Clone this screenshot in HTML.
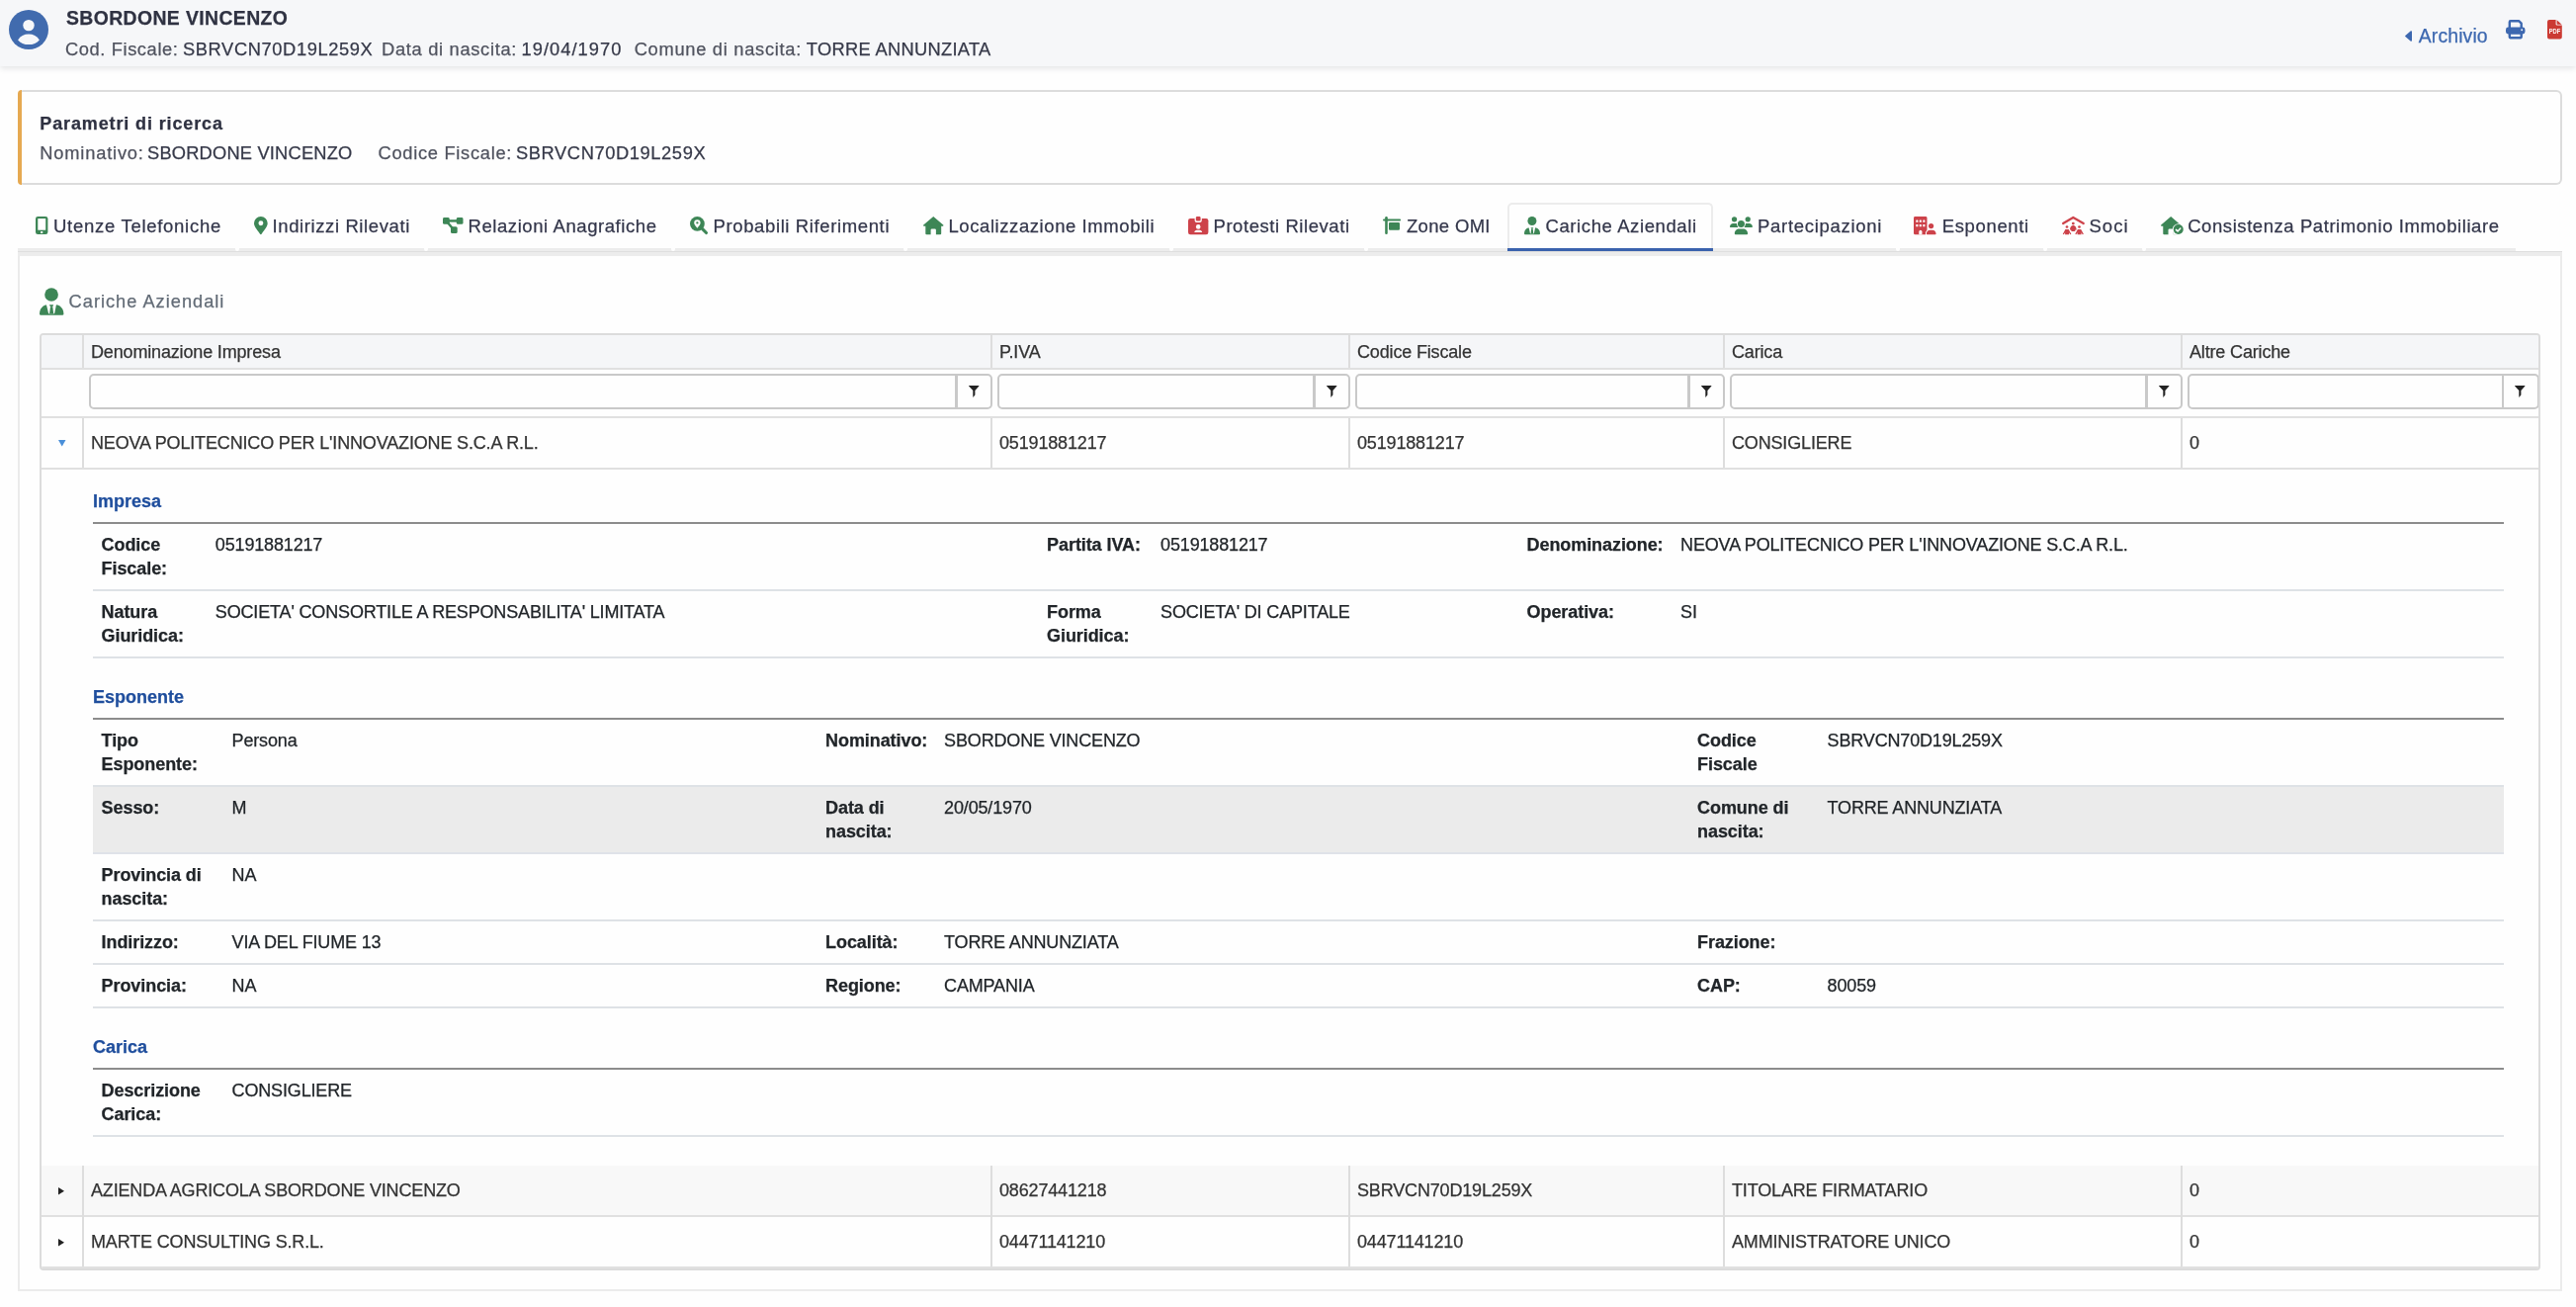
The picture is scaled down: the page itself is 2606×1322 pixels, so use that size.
<!DOCTYPE html>
<html lang="it"><head><meta charset="utf-8"><title>Cariche Aziendali</title>
<style>
*{box-sizing:border-box;margin:0;padding:0}
html,body{width:2606px;height:1322px;overflow:hidden;background:#fefefe}
body{position:relative;font-family:"Liberation Sans",Arial,Helvetica,sans-serif;-webkit-font-smoothing:antialiased;-webkit-text-stroke:0.25px}
.t{position:absolute;white-space:nowrap}
.abs{position:absolute}
svg{position:absolute;overflow:visible}
#wrap{position:absolute;left:0;top:0;width:2606px;height:1322px;will-change:transform}
#hdr{position:absolute;left:0;top:0;width:2606px;height:67px;background:#f6f7f9;box-shadow:0 2px 6px rgba(40,44,60,.13)}
#params{position:absolute;left:18px;top:91px;width:2574px;height:96px;background:#fefefe;border:2px solid #dcdcdc;border-left:0;border-radius:6px}
#params:before{content:"";position:absolute;left:0;top:-2px;bottom:-2px;width:4px;background:#e6a951;border-radius:4px 0 0 4px}
#content{position:absolute;left:18px;top:259px;width:2574px;height:1047px;background:#fefefe;border:2px solid #ebebeb;border-top:0}
#tabline{position:absolute;left:18px;top:251px;width:2527px;height:8px;background:#ececec}
#tabline2{position:absolute;left:18px;top:254px;width:2574px;height:1px;background:#dedede}
#tabfill{position:absolute;left:2545px;top:255px;width:47px;height:4px;background:#ececec}
.notch{position:absolute;top:250px;width:4px;height:4px;background:#fefefe;border-radius:0 0 2px 2px}
#tabact{position:absolute;left:1525px;top:205px;width:208px;height:49px;border:2px solid #ececec;border-bottom:0;border-radius:5px 5px 0 0;background:#fefefe}
#tabact:after{content:"";position:absolute;left:-2px;right:-2px;bottom:0;height:3px;background:#3a62ad}
#grid{position:absolute;left:40px;top:337px;width:2530px;height:948px;border:2px solid #dcdcdc;border-radius:4px;background:#fefefe;overflow:hidden;font-size:18px;color:#333;letter-spacing:-0.16px}
.vl{position:absolute;width:2px;background:#dddddd}
.hl{position:absolute;height:2px;background:#e0e0e0;left:0;width:2526px}
.fi{position:absolute;top:39px;height:36px;border:2px solid #c9c9c9;border-radius:5px;background:#fefefe}
.fi i{position:absolute;right:33.5px;top:0;bottom:0;width:2.5px;background:#c9c9c9}
.g{position:absolute;white-space:nowrap;font-size:18px;line-height:24px;color:#333}
.sec{letter-spacing:0;position:absolute;left:52px;font-size:18px;line-height:24px;font-weight:700;color:#1f4e9d;white-space:nowrap}
table.d{position:absolute;left:52px;width:2439px;border-collapse:collapse;border-top:2px solid #8c8c8c;font-size:18px;line-height:24px;color:#212529;table-layout:fixed}
table.d td{padding:9px 9.6px 9px 9.6px;vertical-align:top;border-bottom:2px solid #dee2e6;white-space:normal}
table.d th{letter-spacing:-0.08px;padding:9px 0 9px 9.6px;vertical-align:top;border-bottom:2px solid #dee2e6;text-align:left;font-weight:700}
table.d th:first-child{padding-left:8.6px}
table.d tr.alt td,table.d tr.alt th{background:#ebebeb;border-bottom-color:#dfe2e8}
</style></head><body><div id="wrap">

<div id="hdr"></div>
<svg style="left:9px;top:10px" width="40" height="40" viewBox="0 0 40 40">
<circle cx="20" cy="20" r="20" fill="#416bae"/><circle cx="20" cy="15.600" r="5.700" fill="#f6f7f9"/>
<path d="M9.100 30.400C11.500 26.600 15.500 24.600 20 24.600S28.500 26.600 30.900 30.400C28.500 33.400 24.500 35.100 20 35.100S11.500 33.400 9.100 30.400z" fill="#f6f7f9"/></svg>
<span class="t " style="left:67.00px;top:9.18px;font-size:19.4px;line-height:19.4px;color:#2f3242;font-weight:700;letter-spacing:0.392px;">SBORDONE VINCENZO</span>
<span class="t " style="left:66.00px;top:41.01px;font-size:18.3px;line-height:18.3px;color:#50535f;letter-spacing:0.601px;">Cod. Fiscale:</span>
<span class="t " style="left:185.00px;top:41.01px;font-size:18.3px;line-height:18.3px;color:#363949;letter-spacing:0.614px;">SBRVCN70D19L259X</span>
<span class="t " style="left:386.00px;top:41.01px;font-size:18.3px;line-height:18.3px;color:#50535f;letter-spacing:0.691px;">Data di nascita:</span>
<span class="t " style="left:527.50px;top:41.01px;font-size:18.3px;line-height:18.3px;color:#363949;letter-spacing:1.045px;">19/04/1970</span>
<span class="t " style="left:641.70px;top:41.01px;font-size:18.3px;line-height:18.3px;color:#50535f;letter-spacing:0.715px;">Comune di nascita:</span>
<span class="t " style="left:815.80px;top:41.01px;font-size:18.3px;line-height:18.3px;color:#363949;letter-spacing:0.313px;">TORRE ANNUNZIATA</span>
<svg style="left:2433px;top:30.8px" width="7" height="11" viewBox="0 0 7 11"><path d="M6.300 .9V10.100L.8 5.500z" fill="#3d68b0" stroke="#3d68b0" stroke-width="1.400" stroke-linejoin="round"/></svg>
<span class="t " style="left:2446.80px;top:27.28px;font-size:19.4px;line-height:19.4px;color:#3d68b0;letter-spacing:0.128px;">Archivio</span>
<svg style="left:2535.4px;top:20.1px" width="19.5" height="19.4" viewBox="0 0 19.5 19.4" fill="none">
<path d="M3.800 8V2.200a1 1 0 0 1 1-1h8.300l2.600 2.500V8" stroke="#3d68b0" stroke-width="2.400" stroke-linejoin="round"/>
<rect x="0" y="7.600" width="19.500" height="6.900" rx="2.400" fill="#3d68b0"/>
<rect x="3.800" y="13.500" width="11.900" height="4.700" rx=".6" fill="#f6f7f9" stroke="#3d68b0" stroke-width="2.400"/>
<circle cx="16.200" cy="10.300" r=".95" fill="#f6f7f9"/></svg>
<svg style="left:2577.4px;top:20px" width="14.8" height="19.6" viewBox="0 0 14.8 19.6">
<path d="M2 0H8.600V4.500a1.100 1.100 0 0 0 1.100 1.100H14.800V17.600a2 2 0 0 1-2 2H2a2 2 0 0 1-2-2V2a2 2 0 0 1 2-2z" fill="#cb3a33"/>
<path d="M9.600 .2L14.600 4.700H10.300a.7.700 0 0 1-.7-.7z" fill="#cb3a33"/>
<text x="1.700" y="14.200" font-family="Liberation Sans,Arial,sans-serif" font-size="7.600" font-weight="700" fill="#fff" textLength="11.600" lengthAdjust="spacingAndGlyphs">PDF</text></svg>
<div id="params"></div>
<span class="t " style="left:40.30px;top:115.56px;font-size:18px;line-height:18px;color:#2f3242;font-weight:700;letter-spacing:0.874px;">Parametri di ricerca</span>
<span class="t " style="left:40.30px;top:146.01px;font-size:18.3px;line-height:18.3px;color:#50535f;letter-spacing:0.808px;">Nominativo:</span>
<span class="t " style="left:149.00px;top:146.01px;font-size:18.3px;line-height:18.3px;color:#363949;letter-spacing:0.195px;">SBORDONE VINCENZO</span>
<span class="t " style="left:382.50px;top:146.01px;font-size:18.3px;line-height:18.3px;color:#50535f;letter-spacing:0.707px;">Codice Fiscale:</span>
<span class="t " style="left:522.00px;top:146.01px;font-size:18.3px;line-height:18.3px;color:#363949;letter-spacing:0.601px;">SBRVCN70D19L259X</span>
<div id="tabline"></div><div id="tabfill"></div><div id="tabline2"></div>
<div class="notch" style="left:237.7px"></div>
<div class="notch" style="left:429.0px"></div>
<div class="notch" style="left:678.6px"></div>
<div class="notch" style="left:914.4px"></div>
<div class="notch" style="left:1182.7px"></div>
<div class="notch" style="left:1380.0px"></div>
<div class="notch" style="left:1917.5px"></div>
<div class="notch" style="left:2067.4px"></div>
<div class="notch" style="left:2167.0px"></div>
<div id="tabact"></div>
<span class="t " style="left:54.00px;top:219.94px;font-size:18.5px;line-height:18.5px;color:#33364a;letter-spacing:0.717px;">Utenze Telefoniche</span>
<span class="t " style="left:275.50px;top:219.94px;font-size:18.5px;line-height:18.5px;color:#33364a;letter-spacing:0.605px;">Indirizzi Rilevati</span>
<span class="t " style="left:473.50px;top:219.94px;font-size:18.5px;line-height:18.5px;color:#33364a;letter-spacing:0.577px;">Relazioni Anagrafiche</span>
<span class="t " style="left:721.50px;top:219.94px;font-size:18.5px;line-height:18.5px;color:#33364a;letter-spacing:0.623px;">Probabili Riferimenti</span>
<span class="t " style="left:959.50px;top:219.94px;font-size:18.5px;line-height:18.5px;color:#33364a;letter-spacing:0.574px;">Localizzazione Immobili</span>
<span class="t " style="left:1227.50px;top:219.94px;font-size:18.5px;line-height:18.5px;color:#33364a;letter-spacing:0.561px;">Protesti Rilevati</span>
<span class="t " style="left:1423.00px;top:219.94px;font-size:18.5px;line-height:18.5px;color:#33364a;letter-spacing:0.322px;">Zone OMI</span>
<span class="t " style="left:1563.50px;top:219.94px;font-size:18.5px;line-height:18.5px;color:#33364a;letter-spacing:0.597px;">Cariche Aziendali</span>
<span class="t " style="left:1778.00px;top:219.94px;font-size:18.5px;line-height:18.5px;color:#33364a;letter-spacing:0.707px;">Partecipazioni</span>
<span class="t " style="left:1964.70px;top:219.94px;font-size:18.5px;line-height:18.5px;color:#33364a;letter-spacing:0.652px;">Esponenti</span>
<span class="t " style="left:2113.50px;top:219.94px;font-size:18.5px;line-height:18.5px;color:#33364a;letter-spacing:1.003px;">Soci</span>
<span class="t " style="left:2213.20px;top:219.94px;font-size:18.5px;line-height:18.5px;color:#33364a;letter-spacing:0.566px;">Consistenza Patrimonio Immobiliare</span>
<svg style="left:35.6px;top:219.0px" width="12.4" height="18.1" viewBox="0 0 12.4 18.1"><rect x="0" y="0" width="12.4" height="18.1" rx="2.3" fill="#3d8656"/><rect x="2.3" y="2.1" width="7.9" height="11.6" fill="#fff"/><rect x="5.1" y="14.9" width="2.2" height="2.1" rx=".4" fill="#fff"/></svg>
<svg style="left:256.5px;top:219.0px" width="13.7" height="18.1" viewBox="0 0 13.7 18.1"><path d="M6.85 0A6.85 6.85 0 0 0 0 6.85C0 9.9 2.4 12.6 6.1 17.7a.95.95 0 0 0 1.500 0C11.300 12.600 13.700 9.900 13.700 6.850A6.850 6.850 0 0 0 6.850 0z" fill="#3d8656"/><circle cx="6.900" cy="6.800" r="2.450" fill="#fff"/></svg>
<svg style="left:448.1px;top:220.1px" width="20.5" height="15.9" viewBox="0 0 20.5 15.9"><rect x="0" y="0" width="6.700" height="6.700" rx="1.500" fill="#3d8656"/><rect x="13.800" y="0" width="6.700" height="6.700" rx="1.500" fill="#3d8656"/><rect x="8" y="9.200" width="6.700" height="6.700" rx="1.500" fill="#3d8656"/><rect x="5" y="2.200" width="10" height="2.450" fill="#3d8656"/><path d="M5.200 5.400L9.600 10.800" stroke="#3d8656" stroke-width="2.400"/></svg>
<svg style="left:698.0px;top:219.0px" width="18.2" height="18.2" viewBox="0 0 18.2 18.2"><path d="M12.400 12.400L16.500 16.500" stroke="#3d8656" stroke-width="3.100" stroke-linecap="round"/><circle cx="7.400" cy="7.400" r="7.400" fill="#3d8656"/><path d="M7.400 3.300a3.200 3.200 0 0 0-3.200 3.200c0 1.700 1.600 3.200 3.200 5.300 1.600-2.100 3.200-3.600 3.200-5.300a3.200 3.200 0 0 0-3.200-3.200z" fill="#fff"/><circle cx="7.400" cy="6.400" r="1.150" fill="#3d8656"/></svg>
<svg style="left:933.5px;top:219.0px" width="20.5" height="18.2" viewBox="0 0 20.5 18.2"><path d="M10.25 0 L20.250 8.600 a.6.600 0 0 1-.4 1.050 H18.200 V17.200 a1 1 0 0 1-1 1 H12.900 V13.600 a1.200 1.200 0 0 0-1.200-1.200 H8.800 a1.200 1.200 0 0 0-1.200 1.200 V18.200 H3.300 a1 1 0 0 1-1-1 V9.650 H.65 a.6.600 0 0 1-.4-1.050 Z" fill="#3d8656"/></svg>
<svg style="left:1201.5px;top:219.0px" width="20.4" height="18.3" viewBox="0 0 20.4 18.3"><rect x="0" y="2.100" width="20.400" height="16.200" rx="2.200" fill="#cd424a"/><path d="M6.600 0H13.800V3.900a2 2 0 0 1-2 2H8.600a2 2 0 0 1-2-2z" fill="#fff"/><rect x="7.850" y="0" width="4.700" height="4.500" rx="1.200" fill="#cd424a"/><circle cx="10.200" cy="10.400" r="2.300" fill="#fff"/><path d="M6.300 16.100c0-1.400 1.200-2.300 2.400-2.300h3c1.200 0 2.400.9 2.400 2.300z" fill="#fff"/></svg>
<svg style="left:1399.0px;top:219.0px" width="18.1" height="18.1" viewBox="0 0 18.1 18.1"><rect x="2.200" y="0" width="2.550" height="18.100" rx="1.250" fill="#3d8656"/><rect x="0" y="2.400" width="18.100" height="2.200" rx="1.100" fill="#3d8656"/><rect x="6" y="6" width="11" height="7.800" rx="1.100" fill="#3d8656"/></svg>
<svg style="left:1542.0px;top:219.0px" width="16.0" height="18.2" viewBox="0 0 16 18.2"><circle cx="7.900" cy="4.500" r="4.500" fill="#3d8656"/><path d="M0 17.300C0 13.600 2.500 11.400 5 11.200H11C13.500 11.400 16 13.600 16 17.300a.9.900 0 0 1-.9.900H.9a.9.900 0 0 1-.9-.9z" fill="#3d8656"/><path d="M4.530 11.100H11.140L9.900 17.140H6z" fill="#fff"/><path d="M6.490 11.260H9.300L8.690 12.600H7.220z" fill="#3d8656"/><path d="M7.220 12.600H8.690L9.300 17.140H6.610z" fill="#3d8656"/></svg>
<svg style="left:1750.0px;top:219.0px" width="22.9" height="18.2" viewBox="0 0 22.9 18.2"><circle cx="4.530" cy="2.800" r="2.650" fill="#3d8656"/><circle cx="18.240" cy="2.800" r="2.650" fill="#3d8656"/><path d="M0 10.300C0 8.400 1.500 7 3.400 7H5.600C7 7 8 7.600 8.400 8.200V10.900H.6A.6.600 0 0 1 0 10.300z" fill="#3d8656"/><path d="M22.900 10.300C22.900 8.400 21.400 7 19.500 7H17.300C15.900 7 14.900 7.600 14.500 8.200V10.900H22.300A.6.600 0 0 0 22.900 10.300z" fill="#3d8656"/><circle cx="11.430" cy="7.470" r="4.400" fill="#fff"/><circle cx="11.430" cy="7.470" r="3.500" fill="#3d8656"/><path d="M4.800 17.300C4.800 14.600 7 12.600 9.500 12.600H13.400C15.900 12.600 18.100 14.600 18.100 17.300A.9.900 0 0 1 17.200 18.200H5.700A.9.900 0 0 1 4.800 17.300z" fill="#3d8656"/></svg>
<svg style="left:1935.9px;top:219.0px" width="22.6" height="18.2" viewBox="0 0 22.6 18.2"><rect x="0" y="0" width="13.500" height="18.200" rx="1.500" fill="#cd424a"/><rect x="2.30" y="3.55" width="2.100" height="2.200" rx=".35" fill="#fff"/><rect x="5.75" y="3.55" width="2.100" height="2.200" rx=".35" fill="#fff"/><rect x="9.30" y="3.55" width="2.100" height="2.200" rx=".35" fill="#fff"/><rect x="2.30" y="8.10" width="2.100" height="2.200" rx=".35" fill="#fff"/><rect x="5.75" y="8.10" width="2.100" height="2.200" rx=".35" fill="#fff"/><rect x="9.30" y="8.10" width="2.100" height="2.200" rx=".35" fill="#fff"/><path d="M5.300 18.200V15.400a1.570 1.570 0 0 1 3.150 0V18.200z" fill="#fff"/><path d="M12.850 18.200C12.300 15.400 14.600 13.800 16 13.800H19.400C21 13.800 23 15.400 22.600 18.200z" fill="#cd424a" stroke="#fff" stroke-width="1.800"/><rect x="12" y="18.200" width="11" height="2" fill="#fff"/><circle cx="17.600" cy="9.550" r="2.600" fill="#cd424a" stroke="#fff" stroke-width="1.400" paint-order="stroke"/><path d="M12.850 17.500C12.850 15.400 14.600 13.800 16.400 13.800H19C20.900 13.800 22.600 15.400 22.600 17.500A.7.700 0 0 1 21.900 18.200H13.550A.7.700 0 0 1 12.850 17.500z" fill="#cd424a"/></svg>
<svg style="left:2086.0px;top:219.0px" width="22.8" height="18.2" viewBox="0 0 22.8 18.2"><path d="M1.100 7L11.330 .95 21.800 7" fill="none" stroke="#cd424a" stroke-width="2.200" stroke-linecap="round" stroke-linejoin="round"/><circle cx="11.330" cy="7.100" r="1.400" fill="#cd424a"/><path d="M8 13.600C8 10.600 9.400 8.900 11.330 8.900C13.300 8.900 14.700 10.600 14.700 13.600L13.600 13.400 13.100 15.100H9.600L9.100 13.400z" fill="#cd424a"/><circle cx="5" cy="10.500" r="1.350" fill="#cd424a"/><circle cx="17.500" cy="10.500" r="1.350" fill="#cd424a"/><path d="M3.400 13H6.700L9.400 17.700 8.300 18.200 7 16.200V18.200H3.100V16.200L1.800 18.200 .8 17.700z" fill="#cd424a"/><path d="M15.900 13H19.200L21.900 17.700 20.800 18.200 19.500 16.200V18.200H15.600V16.200L14.300 18.200 13.300 17.700z" fill="#cd424a"/></svg>
<svg style="left:2186.0px;top:219.0px" width="22.8" height="18.2" viewBox="0 0 22.8 18.2"><path d="M10.25 0 L20.250 8.600 a.6.600 0 0 1-.4 1.050 H18.200 V17.200 a1 1 0 0 1-1 1 H12.900 V13.600 a1.200 1.200 0 0 0-1.200-1.200 H8.800 a1.200 1.200 0 0 0-1.200 1.200 V18.200 H3.300 a1 1 0 0 1-1-1 V9.650 H.65 a.6.600 0 0 1-.4-1.050 Z" fill="#3d8656" transform="scale(.991 1)"/><rect x="12.700" y="9.800" width="10.100" height="8.600" fill="#fefefe"/><circle cx="17.750" cy="13.100" r="5.900" fill="#fefefe"/><circle cx="17.750" cy="13.100" r="5" fill="#3d8656"/><path d="M15.400 13.400L17.100 14.900 19.800 12" fill="none" stroke="#fff" stroke-width="1.500" stroke-linecap="round" stroke-linejoin="round"/></svg>
<div id="content"></div>
<svg style="left:39.7px;top:290.6px" width="24.4" height="28.0" viewBox="0 0 16 18.2"><circle cx="7.900" cy="4.500" r="4.500" fill="#3d8656"/><path d="M0 17.300C0 13.600 2.500 11.400 5 11.200H11C13.500 11.400 16 13.600 16 17.300a.9.900 0 0 1-.9.900H.9a.9.900 0 0 1-.9-.9z" fill="#3d8656"/><path d="M4.530 11.100H11.140L9.900 17.140H6z" fill="#fefefe"/><path d="M6.490 11.260H9.300L8.690 12.600H7.220z" fill="#3d8656"/><path d="M7.220 12.600H8.690L9.300 17.140H6.610z" fill="#3d8656"/></svg>
<span class="t " style="left:69.60px;top:296.09px;font-size:18.2px;line-height:18.2px;color:#626b76;letter-spacing:1.017px;">Cariche Aziendali</span>
<div id="grid">
<div class="abs" style="left:0;top:0;width:2526px;height:33px;background:#f5f6f8"></div>
<div class="abs" style="left:0;top:840.0px;width:2526px;height:50px;background:#f8f8f8"></div>
<div class="hl" style="top:33.0px"></div>
<div class="hl" style="top:82.0px"></div>
<div class="hl" style="top:134.0px"></div>
<div class="hl" style="top:890.0px"></div>
<div class="hl" style="top:942.0px"></div>
<div class="vl" style="left:41.0px;top:0.0px;height:33.0px"></div>
<div class="vl" style="left:41.0px;top:84.0px;height:50.0px"></div>
<div class="vl" style="left:41.0px;top:840.0px;height:102.0px"></div>
<div class="vl" style="left:960.0px;top:0.0px;height:33.0px"></div>
<div class="vl" style="left:960.0px;top:84.0px;height:50.0px"></div>
<div class="vl" style="left:960.0px;top:840.0px;height:102.0px"></div>
<div class="vl" style="left:1322.0px;top:0.0px;height:33.0px"></div>
<div class="vl" style="left:1322.0px;top:84.0px;height:50.0px"></div>
<div class="vl" style="left:1322.0px;top:840.0px;height:102.0px"></div>
<div class="vl" style="left:1701.0px;top:0.0px;height:33.0px"></div>
<div class="vl" style="left:1701.0px;top:84.0px;height:50.0px"></div>
<div class="vl" style="left:1701.0px;top:840.0px;height:102.0px"></div>
<div class="vl" style="left:2164.0px;top:0.0px;height:33.0px"></div>
<div class="vl" style="left:2164.0px;top:84.0px;height:50.0px"></div>
<div class="vl" style="left:2164.0px;top:840.0px;height:102.0px"></div>
<span class="g" style="left:50.00px;top:4.76px;color:#333">Denominazione Impresa</span>
<span class="g" style="left:969.00px;top:4.76px;color:#333">P.IVA</span>
<span class="g" style="left:1331.00px;top:4.76px;color:#333">Codice Fiscale</span>
<span class="g" style="left:1710.00px;top:4.76px;color:#333">Carica</span>
<span class="g" style="left:2173.00px;top:4.76px;color:#333">Altre Cariche</span>
<span class="g" style="left:50.00px;top:96.76px;color:#333">NEOVA POLITECNICO PER L'INNOVAZIONE S.C.A R.L.</span>
<span class="g" style="left:969.00px;top:96.76px;color:#333">05191881217</span>
<span class="g" style="left:1331.00px;top:96.76px;color:#333">05191881217</span>
<span class="g" style="left:1710.00px;top:96.76px;color:#333">CONSIGLIERE</span>
<span class="g" style="left:2173.00px;top:96.76px;color:#333">0</span>
<span class="g" style="left:50.00px;top:852.76px;color:#333">AZIENDA AGRICOLA SBORDONE VINCENZO</span>
<span class="g" style="left:969.00px;top:852.76px;color:#333">08627441218</span>
<span class="g" style="left:1331.00px;top:852.76px;color:#333">SBRVCN70D19L259X</span>
<span class="g" style="left:1710.00px;top:852.76px;color:#333">TITOLARE FIRMATARIO</span>
<span class="g" style="left:2173.00px;top:852.76px;color:#333">0</span>
<span class="g" style="left:50.00px;top:905.26px;color:#333">MARTE CONSULTING S.R.L.</span>
<span class="g" style="left:969.00px;top:905.26px;color:#333">04471141210</span>
<span class="g" style="left:1331.00px;top:905.26px;color:#333">04471141210</span>
<span class="g" style="left:1710.00px;top:905.26px;color:#333">AMMINISTRATORE UNICO</span>
<span class="g" style="left:2173.00px;top:905.26px;color:#333">0</span>
<div class="fi" style="left:48.0px;width:914.0px"><i></i><svg style="right:11.700px;top:9.900px" width="10.500" height="11.900" viewBox="0 0 10.5 11.9"><path d="M.3 0H10.200a.3.300 0 0 1 .2.500L6.400 4.900V9.600L4.300 11.900V4.900L.1 .5A.3.300 0 0 1 .3 0z" fill="#222"/></svg></div>
<div class="fi" style="left:967.0px;width:357.0px"><i></i><svg style="right:11.700px;top:9.900px" width="10.500" height="11.900" viewBox="0 0 10.5 11.9"><path d="M.3 0H10.200a.3.300 0 0 1 .2.500L6.400 4.900V9.600L4.300 11.900V4.900L.1 .5A.3.300 0 0 1 .3 0z" fill="#222"/></svg></div>
<div class="fi" style="left:1329.0px;width:374.0px"><i></i><svg style="right:11.700px;top:9.900px" width="10.500" height="11.900" viewBox="0 0 10.5 11.9"><path d="M.3 0H10.200a.3.300 0 0 1 .2.500L6.400 4.900V9.600L4.300 11.900V4.900L.1 .5A.3.300 0 0 1 .3 0z" fill="#222"/></svg></div>
<div class="fi" style="left:1708.0px;width:458.0px"><i></i><svg style="right:11.700px;top:9.900px" width="10.500" height="11.900" viewBox="0 0 10.5 11.9"><path d="M.3 0H10.200a.3.300 0 0 1 .2.500L6.400 4.900V9.600L4.300 11.900V4.900L.1 .5A.3.300 0 0 1 .3 0z" fill="#222"/></svg></div>
<div class="fi" style="left:2170.5px;width:356.0px"><i></i><svg style="right:11.700px;top:9.900px" width="10.500" height="11.900" viewBox="0 0 10.5 11.9"><path d="M.3 0H10.200a.3.300 0 0 1 .2.500L6.400 4.900V9.600L4.300 11.900V4.900L.1 .5A.3.300 0 0 1 .3 0z" fill="#222"/></svg></div>
<svg style="left:17.0px;top:105.5px" width="7.5" height="6.5" viewBox="0 0 7.5 6.5"><path d="M0 0h7.500L3.750 6.500z" fill="#4a8fd9"/></svg>
<svg style="left:17.0px;top:861.8px" width="6" height="7.500" viewBox="0 0 6 7.5"><path d="M0 0v7.500L6 3.750z" fill="#222"/></svg>
<svg style="left:17.0px;top:913.9px" width="6" height="7.500" viewBox="0 0 6 7.5"><path d="M0 0v7.500L6 3.750z" fill="#222"/></svg>
<div class="sec" style="top:155.76px">Impresa</div>
<table class="d" style="top:188.5px"><colgroup><col style="width:114.25px"><col style="width:841.25px"><col style="width:115px"><col style="width:370.5px"><col style="width:155.5px"><col></colgroup>
<tr><th>Codice Fiscale:</th><td>05191881217</td><th>Partita IVA:</th><td>05191881217</td><th>Denominazione:</th><td>NEOVA POLITECNICO PER L'INNOVAZIONE S.C.A R.L.</td></tr>
<tr><th>Natura Giuridica:</th><td>SOCIETA' CONSORTILE A RESPONSABILITA' LIMITATA</td><th>Forma Giuridica:</th><td>SOCIETA' DI CAPITALE</td><th>Operativa:</th><td>SI</td></tr>
</table>
<div class="sec" style="top:353.76px">Esponente</div>
<table class="d" style="top:387.0px"><colgroup><col style="width:131px"><col style="width:600.5px"><col style="width:120px"><col style="width:762px"><col style="width:131.5px"><col></colgroup>
<tr><th>Tipo Esponente:</th><td>Persona</td><th>Nominativo:</th><td>SBORDONE VINCENZO</td><th>Codice Fiscale</th><td>SBRVCN70D19L259X</td></tr>
<tr class="alt"><th>Sesso:</th><td>M</td><th>Data di nascita:</th><td>20/05/1970</td><th>Comune di nascita:</th><td>TORRE ANNUNZIATA</td></tr>
<tr><th>Provincia di nascita:</th><td>NA</td><th></th><td></td><th></th><td></td></tr>
<tr><th>Indirizzo:</th><td>VIA DEL FIUME 13</td><th>Localit&agrave;:</th><td>TORRE ANNUNZIATA</td><th>Frazione:</th><td></td></tr>
<tr><th>Provincia:</th><td>NA</td><th>Regione:</th><td>CAMPANIA</td><th>CAP:</th><td>80059</td></tr>
</table>
<div class="sec" style="top:708.26px">Carica</div>
<table class="d" style="top:741.0px"><colgroup><col style="width:131px"><col></colgroup>
<tr><th>Descrizione Carica:</th><td>CONSIGLIERE</td></tr>
</table>
</div>
</div></body></html>
